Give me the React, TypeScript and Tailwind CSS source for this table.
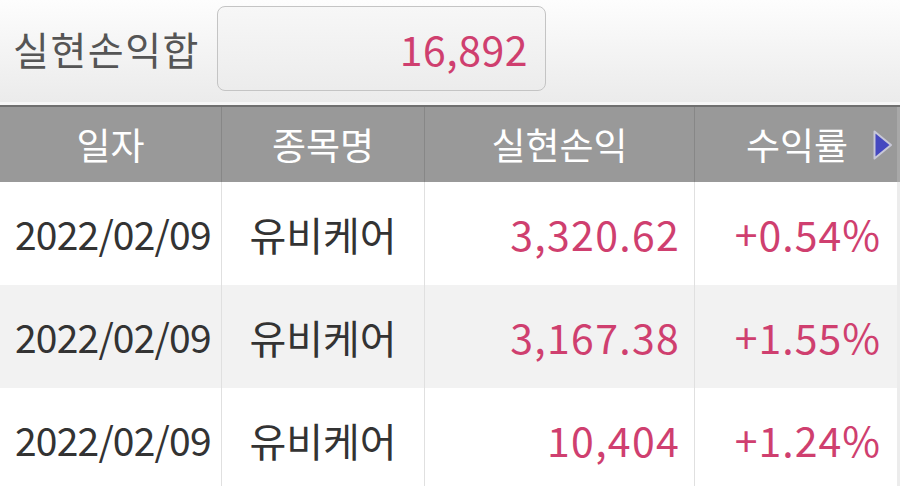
import React from "react";

type Row = {
    date: string;
    name: string;
    profit: string;
    rate: string;
};

const rows: Row[] = [
    { date: "2022/02/09", name: "유비케어", profit: "3,320.62", rate: "+0.54%" },
    { date: "2022/02/09", name: "유비케어", profit: "3,167.38", rate: "+1.55%" },
    { date: "2022/02/09", name: "유비케어", profit: "10,404", rate: "+1.24%" },
];

const font = { fontFamily: '"Noto Sans CJK KR", "Noto Sans", sans-serif' };

export default function App() {
    return (
        <div className="w-[900px] h-[486px] overflow-hidden bg-white" style={font}>
            {/* Summary bar */}
            <div className="h-[102px] flex items-start pl-[13px] pt-[6px] bg-gradient-to-b from-[#fdfdfd] to-[#ebebeb]">
                <div className="w-[190px] h-[84px] flex items-center text-[39px] text-[#555555] tracking-[1.5px]">실현손익합</div>
                <div className="ml-[14px] w-[329px] h-[85px] rounded-[8px] border border-[#c4c4c4] bg-gradient-to-b from-[#f7f7f7] to-[#ececec] flex items-center justify-end pr-[17px]">
                    <span className="text-[41px] tracking-[0.5px] text-[#cf3f6f]">16,892</span>
                </div>
            </div>
            <div className="h-[3px] bg-[#f7f7f7]" />
            <div className="h-[2px] bg-[#707070]" />

            {/* Header */}
            <div className="h-[75px] grid grid-cols-[222px_203px_270px_205px] bg-[#999999] text-white text-[37px]">
                <div className="flex items-center justify-center border-r border-[#878787]">일자</div>
                <div className="flex items-center justify-center border-r border-[#878787]">종목명</div>
                <div className="flex items-center justify-center border-r border-[#878787]">실현손익</div>
                <div className="flex items-center justify-end pr-[4px] border-r-[3px] border-[#a8a8a8]">
                    <span className="mr-[24px]">수익률</span>
                    <svg className="shrink-0" width="21" height="32" viewBox="0 0 21 32">
                        <path d="M2.5 2.5 L19 16 L2.5 29.5 Z" fill="#4548c0" stroke="#c8c8d8" strokeWidth="2" strokeLinejoin="round" />
                    </svg>
                </div>
            </div>

            {/* Rows */}
            {rows.map((r, i) => (
                <div
                    key={i}
                    className={`h-[103px] grid grid-cols-[222px_203px_270px_205px] ${i % 2 === 1 ? "bg-[#f2f2f2]" : "bg-white"}`}
                >
                    <div className="flex items-center pl-[15px] text-[39px] tracking-[-0.8px] text-[#333333] border-r border-[#e0e0e0]">{r.date}</div>
                    <div className="flex items-center justify-center text-[40px] text-[#333333] border-r border-[#e0e0e0]">{r.name}</div>
                    <div className="flex items-center justify-end pr-[14px] text-[41px] tracking-[1.3px] text-[#cf3f6f] border-r border-[#e0e0e0]">{r.profit}</div>
                    <div className="flex items-center justify-end pr-[16px] text-[41px] tracking-[1px] text-[#cf3f6f] border-r-[3px] border-[#ececec]">{r.rate}</div>
                </div>
            ))}
        </div>
    );
}
